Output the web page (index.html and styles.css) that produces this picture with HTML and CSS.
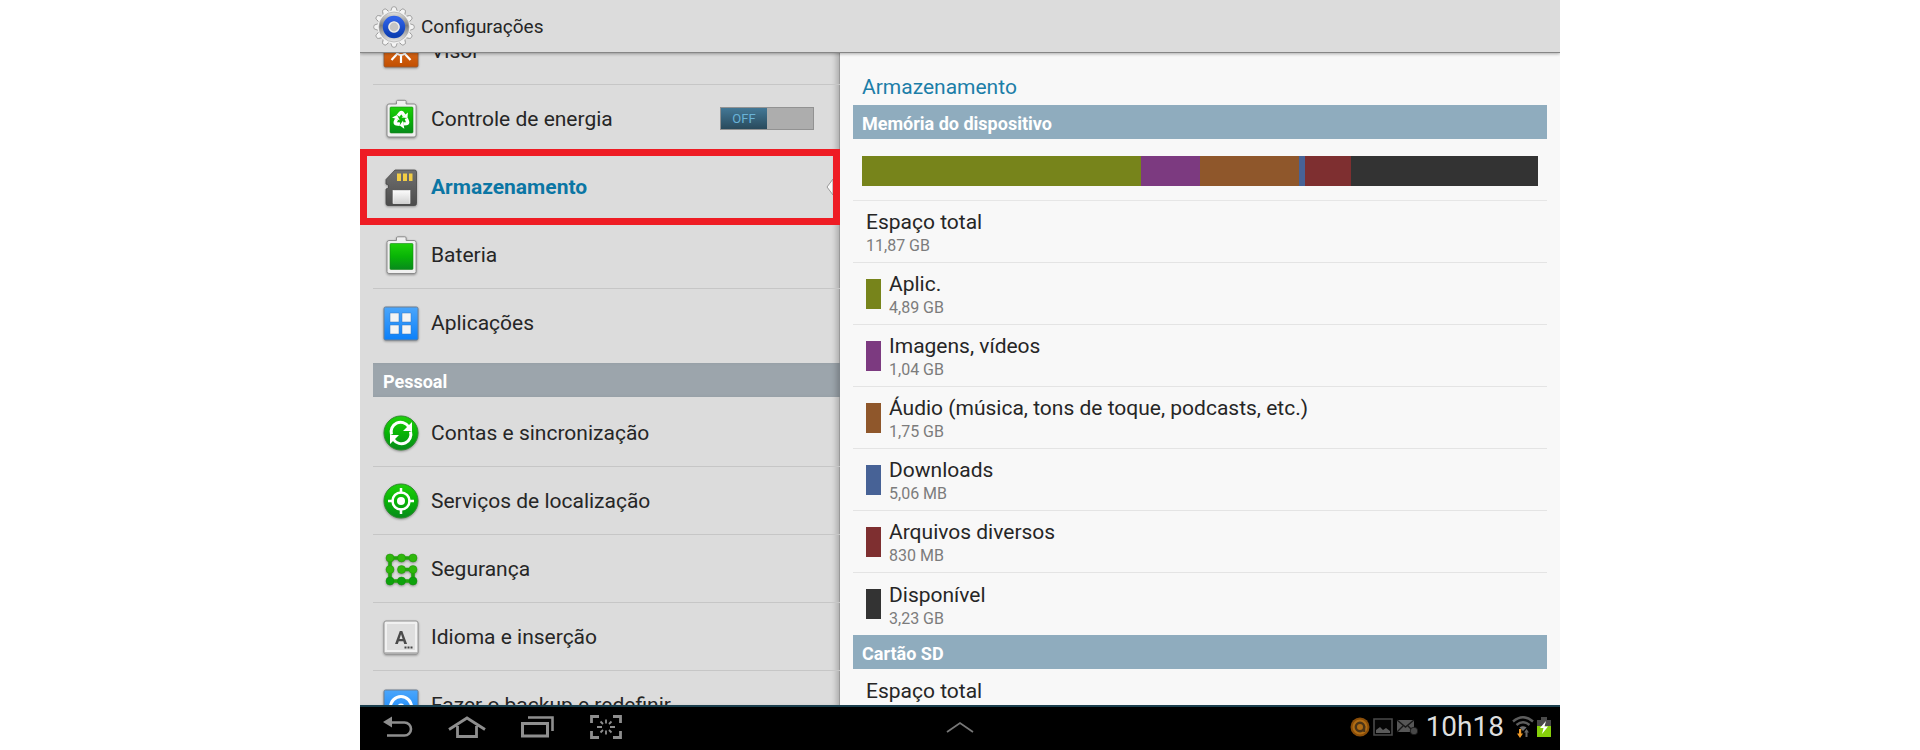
FILE: index.html
```html
<!DOCTYPE html>
<html lang="pt-BR">
<head>
    <meta charset="UTF-8">
    <meta name="viewport" content="width=device-width, initial-scale=1.0">
    <title>Configurações</title>
    <link rel="stylesheet" href="styles.css">
</head>
<body>
    <!-- shared gradients and shapes -->
    <svg class="defs" width="0" height="0" aria-hidden="true">
        <defs>
            <linearGradient id="green" x1="0" y1="0" x2="0" y2="1">
                <stop offset="0" stop-color="#1fd00a"/>
                <stop offset="0.5" stop-color="#08b406"/>
                <stop offset="1" stop-color="#078a1c"/>
            </linearGradient>
            <linearGradient id="blue" x1="0" y1="0" x2="0" y2="1">
                <stop offset="0" stop-color="#4ba6fb"/>
                <stop offset="1" stop-color="#0a80fa"/>
            </linearGradient>
            <linearGradient id="orange" x1="0" y1="0" x2="0" y2="1">
                <stop offset="0" stop-color="#f08030"/>
                <stop offset="1" stop-color="#c14e00"/>
            </linearGradient>
            <linearGradient id="light" x1="0" y1="0" x2="0" y2="1">
                <stop offset="0" stop-color="#fbfbfb"/>
                <stop offset="1" stop-color="#d2d2d2"/>
            </linearGradient>
            <linearGradient id="card" x1="0" y1="0" x2="0" y2="1">
                <stop offset="0" stop-color="#707070"/>
                <stop offset="1" stop-color="#4c4c4c"/>
            </linearGradient>
            <linearGradient id="metal" x1="0" y1="0" x2="0" y2="1">
                <stop offset="0" stop-color="#e4e4e4"/>
                <stop offset="0.45" stop-color="#7d7d7d"/>
                <stop offset="1" stop-color="#e8e8e8"/>
            </linearGradient>
            <linearGradient id="ring" x1="0" y1="0" x2="0" y2="1">
                <stop offset="0" stop-color="#2f62e8"/>
                <stop offset="1" stop-color="#0d3fb4"/>
            </linearGradient>
            <path id="tooth" d="M17.5 6L18.8 2Q19.200 0.800 20.300 0.800h1.400Q22.800 0.800 23.200 2L24.500 6z"/>
            <g id="arrow">
                <path d="M16 16.800L18.200 14.100Q19.300 13 20.500 14.100L22.200 16.600" fill="none" stroke="#fff" stroke-width="3.400"/>
                <path d="M19.500 18.600l6 .4.400-5.600z" fill="#fff"/>
            </g>
        </defs>
    </svg>

    <div class="tablet">
        <header class="action-bar">
            <svg class="gear" viewBox="0 0 42 42" aria-hidden="true">
                <g fill="#f4f4f4" stroke="#8e8e8e" stroke-width="0.8">
                    <use href="#tooth"/>
                    <use href="#tooth" transform="rotate(30 21 21)"/>
                    <use href="#tooth" transform="rotate(60 21 21)"/>
                    <use href="#tooth" transform="rotate(90 21 21)"/>
                    <use href="#tooth" transform="rotate(120 21 21)"/>
                    <use href="#tooth" transform="rotate(150 21 21)"/>
                    <use href="#tooth" transform="rotate(180 21 21)"/>
                    <use href="#tooth" transform="rotate(210 21 21)"/>
                    <use href="#tooth" transform="rotate(240 21 21)"/>
                    <use href="#tooth" transform="rotate(270 21 21)"/>
                    <use href="#tooth" transform="rotate(300 21 21)"/>
                    <use href="#tooth" transform="rotate(330 21 21)"/>
                </g>
                <circle cx="21" cy="21" r="16.5" fill="#f1f1f1"/>
                <circle cx="21" cy="21" r="15" fill="url(#metal)" stroke="#a5a5a5" stroke-width="0.6"/>
                <circle cx="21" cy="21" r="8.5" fill="#c9c9c9" stroke="url(#ring)" stroke-width="5.4"/>
                <circle cx="21" cy="21" r="5" fill="#c4c4c4" stroke="#efefef" stroke-width="1.2"/>
            </svg>
            <h1>Configurações</h1>
        </header>

        <main class="panes">
            <nav class="menu" aria-label="Configurações">
                <ul class="menu-list">
                    <li>
                        <a href="#visor">
                            <svg class="icon" viewBox="0 0 38 40" aria-hidden="true">
                                <rect x="2" y="3" width="34" height="33" rx="1.5" fill="url(#orange)" stroke="#8f5a38" stroke-width="0.8"/>
                                <g stroke="#fff" stroke-width="2.2" fill="none">
                                    <circle cx="19" cy="19" r="5"/>
                                    <path d="M19 24v8M19 14V6M13 19H8M25 19h5M15.500 22.500L9.500 29M22.500 22.500L28.500 29M15 15l-5-4M23 15l5-4"/>
                                </g>
                            </svg>
                            Visor
                        </a>
                    </li>
                    <li>
                        <a href="#energia">
                            <svg class="icon" viewBox="0 0 38 40" aria-hidden="true">
                                <path d="M14.5 5V2.500q0-1.200 1.200-1.200h7.200q1.200 0 1.200 1.200V5h8q2 0 2 2v29q0 2-2 2H7q-2 0-2-2V7q0-2 2-2z" fill="#f0f0f0" stroke="#8c8c8c"/>
                                <rect x="8" y="8" width="23" height="26" rx="1" fill="url(#green)" stroke="#178717" stroke-width="0.6"/>
                                <use href="#arrow"/>
                                <use href="#arrow" transform="rotate(120 19.400 20.500)"/>
                                <use href="#arrow" transform="rotate(240 19.400 20.500)"/>
                            </svg>
                            Controle de energia
                        </a>
                        <button type="button" class="switch" role="switch" aria-checked="false" aria-label="Controle de energia"><span>OFF</span></button>
                    </li>
                    <li class="selected">
                        <a href="#armazenamento" aria-current="page">
                            <svg class="icon" viewBox="0 0 38 40" aria-hidden="true">
                                <path d="M13 3h19.500q2 0 2 2v31.500q0 2-2 2H6q-2 0-2-2V22l2.500-1v-3L4 17v-4.500z" fill="url(#card)" stroke="#484848" stroke-width="0.8"/>
                                <path d="M15 6.500h4V14h-4zM21 6.500h4V14h-4zM27 6.500h3.500V14H27z" fill="#f2cd45"/>
                                <rect x="11" y="23.500" width="17" height="13" fill="url(#light)" stroke="#fff" stroke-width="0.6"/>
                            </svg>
                            Armazenamento
                        </a>
                        <svg class="pointer" viewBox="0 0 7 16" aria-hidden="true">
                            <path d="M7 0L1 8l6 8z" fill="#fafafa" stroke="#999"/>
                        </svg>
                        <div class="highlight"></div>
                    </li>
                    <li>
                        <a href="#bateria">
                            <svg class="icon" viewBox="0 0 38 40" aria-hidden="true">
                                <path d="M14.500 5.500V3q0-1.200 1.200-1.200h7.200q1.200 0 1.200 1.200v2.500h8q2 0 2 2v29q0 2-2 2H7q-2 0-2-2v-29q0-2 2-2z" fill="#f0f0f0" stroke="#8c8c8c"/>
                                <rect x="8" y="8.500" width="23" height="26" rx="1" fill="url(#green)" stroke="#178717" stroke-width="0.6"/>
                            </svg>
                            Bateria
                        </a>
                    </li>
                    <li>
                        <a href="#aplicacoes">
                            <svg class="icon" viewBox="0 0 38 40" aria-hidden="true">
                                <rect x="2" y="4" width="34" height="33" rx="1.5" fill="url(#blue)" stroke="#6d7f92"/>
                                <path d="M8 10h9v9H8zM20 10h9v9h-9zM8 22h9v9H8zM20 22h9v9h-9z" fill="#f4f4f4" stroke="#3577bd" stroke-width="0.5"/>
                            </svg>
                            Aplicações
                        </a>
                    </li>
                </ul>

                <h2 class="menu-heading">Pessoal</h2>
                <ul class="menu-list">
                    <li>
                        <a href="#contas">
                            <svg class="icon" viewBox="0 0 38 40" aria-hidden="true">
                                <circle cx="19" cy="20" r="17" fill="url(#green)" stroke="#2d8a2d"/>
                                <g fill="none" stroke="#fff" stroke-width="3">
                                    <path d="M9.500 21.500A9.500 9.500 0 0 1 26.500 13.500"/>
                                    <path d="M28.500 18.500A9.500 9.500 0 0 1 11.500 26.500"/>
                                </g>
                                <path d="M30 9v9h-9zM8 31v-9h9z" fill="#fff"/>
                            </svg>
                            Contas e sincronização
                        </a>
                    </li>
                    <li>
                        <a href="#localizacao">
                            <svg class="icon" viewBox="0 0 38 40" aria-hidden="true">
                                <circle cx="19" cy="20" r="17" fill="url(#green)" stroke="#2d8a2d"/>
                                <g fill="none" stroke="#fff" stroke-width="2.5">
                                    <circle cx="19" cy="20" r="8.5"/>
                                    <path d="M19 7v5.500M19 27.500V33M6 20h5.500M26.500 20H32"/>
                                </g>
                                <circle cx="19" cy="20" r="4" fill="#fff"/>
                            </svg>
                            Serviços de localização
                        </a>
                    </li>
                    <li>
                        <a href="#seguranca">
                            <svg class="icon" viewBox="0 0 38 40" aria-hidden="true">
                                <path d="M31 9H8v23h23V20.500H19" fill="none" stroke="#20a60c" stroke-width="3.6"/>
                                <g fill="#2fb80c" stroke="#218f0a" stroke-width="0.5">
                                    <circle cx="8" cy="9" r="4"/>
                                    <circle cx="19.5" cy="9" r="4"/>
                                    <circle cx="31" cy="9" r="4"/>
                                    <circle cx="8" cy="20.5" r="4"/>
                                    <circle cx="19.5" cy="20.5" r="4"/>
                                    <circle cx="31" cy="20.5" r="4"/>
                                </g>
                                <g fill="#0da20c" stroke="#128a0a" stroke-width="0.5">
                                    <circle cx="8" cy="32" r="4"/>
                                    <circle cx="19.5" cy="32" r="4"/>
                                    <circle cx="31" cy="32" r="4"/>
                                </g>
                            </svg>
                            Segurança
                        </a>
                    </li>
                    <li>
                        <a href="#idioma">
                            <svg class="icon" viewBox="0 0 38 40" aria-hidden="true">
                                <rect x="2" y="4" width="34" height="33" rx="2" fill="#f1f1f1" stroke="#929292"/>
                                <rect x="5" y="7" width="28" height="26" fill="#dedede"/>
                                <path d="M3 36h32" stroke="#aaa" stroke-width="1.5"/>
                                <text x="13" y="27" class="key-letter">A</text>
                                <path d="M22.500 30.500h8" stroke="#444" stroke-width="1.800" stroke-dasharray="2 1"/>
                            </svg>
                            Idioma e inserção
                        </a>
                    </li>
                    <li>
                        <a href="#backup">
                            <svg class="icon" viewBox="0 0 38 40" aria-hidden="true">
                                <rect x="2" y="5" width="34" height="33" rx="1.5" fill="url(#blue)" stroke="#6d7f92"/>
                                <circle cx="19" cy="22" r="10.5" fill="none" stroke="#fff" stroke-width="3"/>
                                <circle cx="19" cy="22" r="3.5" fill="#fff"/>
                            </svg>
                            Fazer o backup e redefinir
                        </a>
                    </li>
                </ul>
            </nav>

            <section class="details">
                <h2 class="details-title">Armazenamento</h2>

                <h3 class="section-heading">Memória do dispositivo</h3>
                <div class="usage">
                    <div class="usage-bar">
                        <span class="apps" style="width: 41.3%"></span>
                        <span class="images" style="width: 8.7%"></span>
                        <span class="audio" style="width: 14.7%"></span>
                        <span class="downloads" style="width: 0.9%"></span>
                        <span class="misc" style="width: 6.8%"></span>
                        <span class="free" style="width: 27.6%"></span>
                    </div>
                </div>
                <ul class="storage-list">
                    <li>
                        <div><h4>Espaço total</h4><p>11,87 GB</p></div>
                    </li>
                    <li>
                        <span class="swatch apps"></span>
                        <div><h4>Aplic.</h4><p>4,89 GB</p></div>
                    </li>
                    <li>
                        <span class="swatch images"></span>
                        <div><h4>Imagens, vídeos</h4><p>1,04 GB</p></div>
                    </li>
                    <li>
                        <span class="swatch audio"></span>
                        <div><h4>Áudio (música, tons de toque, podcasts, etc.)</h4><p>1,75 GB</p></div>
                    </li>
                    <li>
                        <span class="swatch downloads"></span>
                        <div><h4>Downloads</h4><p>5,06 MB</p></div>
                    </li>
                    <li>
                        <span class="swatch misc"></span>
                        <div><h4>Arquivos diversos</h4><p>830 MB</p></div>
                    </li>
                    <li>
                        <span class="swatch free"></span>
                        <div><h4>Disponível</h4><p>3,23 GB</p></div>
                    </li>
                </ul>

                <h3 class="section-heading">Cartão SD</h3>
                <ul class="storage-list">
                    <li>
                        <div><h4>Espaço total</h4></div>
                    </li>
                </ul>
            </section>
        </main>

        <footer class="system-bar">
            <div class="nav-buttons">
                <button type="button" aria-label="Voltar">
                    <svg width="30" height="22" viewBox="0 0 30 22"><path d="M9 6.500h12.500a6.500 6.500 0 0 1 0 13H4" fill="none" stroke="#8e8e8e" stroke-width="2.600"/><path d="M0 6l9-5.500v11z" fill="#8e8e8e"/></svg>
                </button>
                <button type="button" aria-label="Início">
                    <svg width="38" height="22" viewBox="0 0 38 22"><path d="M1 13.500L19 2l18 11.500M9.500 10v10.500h19V10" fill="none" stroke="#8e8e8e" stroke-width="2.800"/></svg>
                </button>
                <button type="button" aria-label="Recentes">
                    <svg width="34" height="22" viewBox="0 0 34 22"><path d="M1.500 7.500h25v12.500h-25z" fill="none" stroke="#8e8e8e" stroke-width="3"/><path d="M7 1.500h24.500V15" fill="none" stroke="#8e8e8e" stroke-width="2.600"/></svg>
                </button>
                <button type="button" aria-label="Captura de tela">
                    <svg width="32" height="24" viewBox="0 0 32 24"><g fill="none" stroke="#8e8e8e"><path d="M1.500 8V1.500H9M23 1.500h7.500V8M30.500 16v6.500H23M9 22.500H1.500V16" stroke-width="2.800"/><path d="M16 4.500v4M16 15.500v4M7 12h5M20 12h5M10.500 6.500l2.500 2.500M21.500 6.500L19 9M10.500 17.500L13 15M21.500 17.500L19 15" stroke-width="1.800"/></g></svg>
                </button>
            </div>
            <button type="button" class="tray" aria-label="Miniaplicativos">
                <svg width="28" height="12" viewBox="0 0 28 12"><path d="M1 11L14 2l13 9" fill="none" stroke="#777" stroke-width="1.800"/></svg>
            </button>
            <div class="status">
                <svg width="20" height="20" viewBox="0 0 20 20" aria-hidden="true"><circle cx="10" cy="10" r="9.5" fill="#8a4d08"/><circle cx="10" cy="10" r="7.500" fill="#b06c14"/><circle cx="10" cy="10" r="4.200" fill="none" stroke="#4a3418" stroke-width="2.400"/><path d="M14.200 9v6" stroke="#4a3418" stroke-width="2"/></svg>
                <svg width="20" height="18" viewBox="0 0 20 18" aria-hidden="true"><path d="M1 1h18v16H1z" fill="#050505" stroke="#4a4a4a" stroke-width="1.600"/><path d="M3 15v-3l4-3 3 3 3-2 4 3v2z" fill="#5a5a5a"/></svg>
                <svg width="22" height="18" viewBox="0 0 22 18" aria-hidden="true"><path d="M1 2h17v12H1z" fill="#565656"/><path d="M1 2l8.500 7L18 2M1 14l6-6M18 14l-6-6" fill="none" stroke="#181818" stroke-width="1.400"/><circle cx="18" cy="13" r="3.800" fill="#484848" stroke="#111" stroke-width="0.800"/></svg>
                <time>10h18</time>
                <svg width="22" height="24" viewBox="0 0 22 24" aria-hidden="true"><g fill="none" stroke="#5d5d5d" stroke-width="2.400"><path d="M1 6.500q10-8.500 20 0"/><path d="M4.500 10q6.500-5.500 13 0"/></g><path d="M7.500 12.500q3.500-2.500 7 0L11 16z" fill="#707070"/><path d="M7 14h2.200v4.500H11L8 23l-3-4.500h2z" fill="#f09a28"/><path d="M13.500 22v-4.500H12l2.500-3.500 2.500 3.500h-1.500V22z" fill="#666"/></svg>
                <svg width="14" height="20" viewBox="0 0 14 20" aria-hidden="true"><path d="M4 0h6v3h4v17H0V3h4z" fill="#4a4a4a"/><path d="M0 9h14v11H0z" fill="#86cf0a"/><path d="M9 4l-6 7h3.500L5 17l6-7.500H7.500z" fill="#fff"/></svg>
            </div>
        </footer>
    </div>
</body>
</html>
```
FILE: styles.css
```css
* {
    box-sizing: border-box;
}
body {
    margin: 0;
    background-color: #fff;
    font-family: Roboto, sans-serif;
    font-size: 21px;
    color: #262626;
}
h1, h2, h3, h4, p, ul {
    margin: 0;
    padding: 0;
    font-weight: normal;
}
ul {
    list-style: none;
}
button {
    padding: 0;
    border: none;
    background: none;
    font-family: inherit;
    cursor: pointer;
}
svg {
    display: block;
    flex-shrink: 0;
}
.defs {
    position: absolute;
}
.tablet {
    display: flex;
    flex-direction: column;
    max-width: 1200px;
    height: 100vh;
    margin: 0 auto;
    overflow: hidden;
    background-color: #f8f8f8;
}

/* top bar */
.action-bar {
    display: flex;
    align-items: center;
    gap: 6px;
    height: 53px;
    padding: 2px 13px 0;
    flex-shrink: 0;
    background-color: #dcdcdc;
    border-bottom: 1px solid #868686;
    box-shadow: 0 1px 3px rgba(0, 0, 0, 0.3);
    z-index: 1;
}
.action-bar h1 {
    font-size: 19px;
    line-height: 24px;
}
.gear {
    width: 42px;
    height: 42px;
}
.panes {
    display: flex;
    flex: 1;
    min-height: 0;
}

/* left menu */
.menu {
    width: 40%;
    padding-left: 13px;
    overflow: hidden;
    background-color: #dcdcdc;
    box-shadow: inset -1px 0 0 #999, inset -7px 0 6px -4px rgba(0, 0, 0, 0.25);
}
/* the list is scrolled a little past its first entry */
.menu-list:first-child {
    margin-top: -36px;
    padding-bottom: 6px;
}
.menu-list li {
    display: flex;
    align-items: center;
    position: relative;
    height: 68px;
    border-bottom: 1px solid #c6c6c6;
}
.menu-list:first-child li:last-child {
    border-bottom: none;
}
.menu-list a {
    display: flex;
    align-items: center;
    flex: 1;
    gap: 11px;
    padding-left: 9px;
    color: inherit;
    line-height: 26px;
    text-decoration: none;
    white-space: nowrap;
}
.menu-list .selected a {
    font-weight: bold;
    color: #0b76a4;
}
.icon {
    width: 38px;
    height: 40px;
    filter: drop-shadow(0 1px 1px rgba(0, 0, 0, 0.35));
}
.key-letter {
    font-size: 18px;
    font-weight: bold;
    fill: #4a4a4a;
}
.menu-heading {
    height: 34px;
    margin-bottom: 2px;
    padding-left: 10px;
    line-height: 38px;
    font-size: 18px;
    font-weight: bold;
    color: #fff;
    background-color: #9ca5ac;
    box-shadow: inset -7px 0 6px -4px rgba(0, 0, 0, 0.25);
}
.switch {
    width: 94px;
    height: 23px;
    margin-right: 26px;
    border: 1px solid #929292;
    background-color: #adadad;
    text-align: left;
}
.switch span {
    display: block;
    width: 46px;
    line-height: 21px;
    font-size: 13px;
    text-align: center;
    color: #69b3d8;
    background: linear-gradient(#437896, #294a5c);
}
.pointer {
    width: 7px;
    height: 16px;
    margin-right: 7px;
}
.highlight {
    position: absolute;
    top: -4px;
    right: 0;
    bottom: -5px;
    left: -13px;
    border: 7px solid #ee1c24;
}

/* right pane */
.details {
    flex: 1;
    min-width: 0;
    padding: 0 13px;
    overflow: hidden;
}
.details-title {
    height: 52px;
    padding: 22px 9px 0;
    font-size: 21px;
    line-height: 24px;
    color: #1c7ea8;
}
.section-heading {
    height: 34px;
    padding-left: 9px;
    line-height: 38px;
    font-size: 18px;
    font-weight: bold;
    color: #fff;
    background-color: #8facbe;
}
.usage {
    padding: 17px 9px 14px;
    border-bottom: 1px solid #e6e6e6;
}
.usage-bar {
    display: flex;
    height: 30px;
}
.storage-list li {
    display: flex;
    align-items: center;
    gap: 8px;
    height: 62px;
    padding-left: 13px;
    border-bottom: 1px solid #e4e4e4;
}
.storage-list li:last-child {
    border-bottom: none;
}
.storage-list div {
    height: 45px;
}
.storage-list h4 {
    font-size: 21px;
    line-height: 26px;
}
.storage-list p {
    font-size: 16px;
    line-height: 22px;
    color: #7c7c7c;
}
.swatch {
    width: 15px;
    height: 30px;
}
.apps {
    background-color: #77841b;
}
.images {
    background-color: #7c3a80;
}
.audio {
    background-color: #8f572b;
}
.downloads {
    background-color: #476296;
}
.misc {
    background-color: #7e2f30;
}
.free {
    background-color: #333;
}

/* bottom bar */
.system-bar {
    display: grid;
    grid-template-columns: 1fr auto 1fr;
    align-items: center;
    height: 45px;
    padding: 0 9px 3px;
    flex-shrink: 0;
    background-color: #000;
    border-top: 2px solid #1a3f4e;
    z-index: 1;
}
.nav-buttons {
    display: flex;
    align-items: center;
    gap: 35px;
    padding-left: 14px;
}
.status {
    display: flex;
    align-items: center;
    justify-content: flex-end;
    gap: 3px;
}
.status time {
    margin: 0 5px;
    font-size: 28px;
    line-height: 32px;
    color: #dedede;
}
```
